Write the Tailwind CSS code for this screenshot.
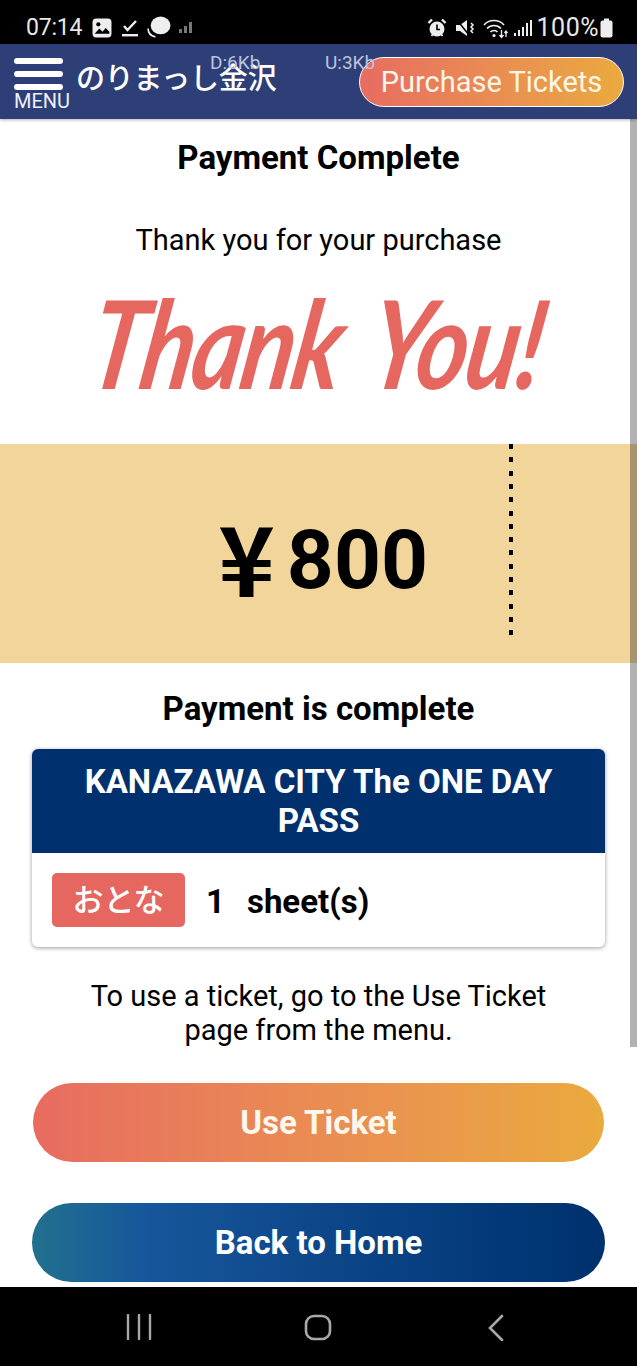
<!DOCTYPE html>
<html lang="en">
<head>
<meta charset="utf-8">
<title>Payment Complete</title>
<script src="https://cdn.jsdelivr.net/npm/@tailwindcss/browser@4"></script>
</head>
<body class="m-0 bg-white">
<div class="relative flex h-[1366px] w-[637px] flex-col overflow-hidden font-['Roboto','Noto_Sans_CJK_JP',sans-serif] text-black">

  <!-- Phone status bar -->
  <div class="flex h-[44px] shrink-0 items-center justify-between bg-black pl-[26px] pr-[24px] pt-[11px] text-[#e8e8e8]">
    <div class="flex items-center gap-[7px]">
      <span class="text-[23px] leading-none tracking-[-0.2px]">07:14</span>
      <svg class="ml-[3px]" width="20" height="20" viewBox="0 0 19 19"><rect x="0.5" y="0.5" width="18" height="18" rx="3.5" fill="#eee"/><circle cx="6" cy="6" r="2" fill="#000"/><path d="M2.5 15l4.5-5 3 3 3-3.5 3.5 3.5v2h-14z" fill="#000"/></svg>
      <svg class="ml-[3px]" width="17" height="18" viewBox="0 0 17 18"><path d="M2 7l3.5 4L14 2" fill="none" stroke="#eee" stroke-width="2.4"/><rect x="0" y="15" width="16" height="2.4" fill="#eee"/></svg>
      <svg width="25" height="25" viewBox="0 0 24 24"><ellipse cx="14" cy="10" rx="9.5" ry="8.5" fill="#eee"/><path d="M2 13c0 4 2 7 7 8" fill="none" stroke="#eee" stroke-width="1.6"/></svg>
      <svg class="ml-[1px]" width="14" height="13" viewBox="0 0 14 13"><rect x="0" y="8" width="3" height="4" fill="#777"/><rect x="5" y="5" width="3" height="7" fill="#777"/><rect x="10" y="1" width="3" height="11" fill="#777"/></svg>
    </div>
    <div class="flex items-center gap-[5px]">
      <svg class="-ml-[6px]" width="20" height="20" viewBox="0 0 20 20"><circle cx="10" cy="11" r="7.5" fill="#eee"/><path d="M10 6.5v5h3" fill="none" stroke="#000" stroke-width="1.6"/><path d="M1.5 5L5 1.5M18.500 5L15 1.500" stroke="#eee" stroke-width="2.400"/><path d="M4.500 18l1.500-2M15.500 18l-1.500-2" stroke="#eee" stroke-width="1.800"/></svg>
      <svg class="ml-[3px]" width="20" height="20" viewBox="0 0 20 20"><path d="M1 7h4l7-5v16l-7-5H1z" fill="#eee"/><path d="M2 2l12 15" stroke="#000" stroke-width="1.500"/><path d="M16 5l2 2-2 2 2 2-2 2 2 2" fill="none" stroke="#eee" stroke-width="1.500"/></svg>
      <svg class="ml-[3px]" width="26" height="22" viewBox="0 0 26 22"><path d="M1 8c5-6 15-6 20 0M4 11.500c4-4 10-4 14 0M7.500 15c2-2 5-2 7 0" fill="none" stroke="#eee" stroke-width="1.700"/><circle cx="11" cy="18.500" r="1.600" fill="#eee"/><path d="M18.500 13v7M16.500 18l2 2.500 2-2.500M23 20v-6M21.500 16l1.500-2 1.500 2" fill="none" stroke="#eee" stroke-width="1.300"/></svg>
      <svg width="18" height="18" viewBox="0 0 18 18"><g fill="#eee"><rect x="0" y="14" width="2" height="3"/><rect x="4" y="11" width="2" height="6"/><rect x="8" y="8" width="2" height="9"/><rect x="12" y="4" width="2" height="13"/><rect x="16" y="1" width="2" height="16"/></g></svg>
      <span class="text-[25px] leading-none tracking-[0.5px]">100%</span>
      <svg class="-ml-[4px]" width="13" height="20" viewBox="0 0 13 20"><rect x="0.500" y="2.500" width="12" height="17" rx="2" fill="#eee"/><rect x="4" y="0.500" width="5" height="3" fill="#eee"/></svg>
    </div>
  </div>

  <!-- Application header -->
  <header class="relative flex h-[75px] shrink-0 items-center justify-between bg-[#2e3f78] pl-[14px] pr-[13px] shadow-[0_1px_3px_rgba(0,0,0,0.3)]">
    <div class="flex h-full items-start">
      <div class="flex w-[58px] flex-col pt-[14px]">
        <div class="flex w-[49px] flex-col gap-[7px]">
          <span class="h-[6px] rounded-full bg-white"></span>
          <span class="h-[6px] rounded-full bg-white"></span>
          <span class="h-[6px] rounded-full bg-white"></span>
        </div>
        <span class="text-[20px] leading-[22px] text-[#eef0f8]">MENU</span>
      </div>
      <span class="ml-[4px] mt-[21px] text-[29px] font-medium leading-none tracking-[-0.2px] text-white">のりまっし金沢</span>
    </div>
    <a class="flex h-[50px] w-[265px] items-center justify-center rounded-full border border-white bg-linear-to-r from-[#e76c60] to-[#eaaa3d] pt-[1px] text-[29px] leading-none text-[#fdf6ea]">Purchase Tickets</a>
    <!-- Data-rate overlay drawn by the phone -->
    <span class="absolute left-[210px] top-[9px] text-[19px] leading-none text-[#bcc3dd]">D:6Kb</span>
    <span class="absolute left-[325px] top-[9px] text-[19px] leading-none text-[#bcc3dd]">U:3Kb</span>
  </header>

  <!-- Page body -->
  <main class="flex min-h-0 flex-1 flex-col items-center">
    <h1 class="mt-[21px] text-[33px] font-bold leading-[36px]">Payment Complete</h1>
    <p class="mt-[47px] text-[29px] leading-[34px]">Thank you for your purchase</p>
    <p class="mt-[16px] flex h-[136px] w-full items-center justify-center font-['Lato','Roboto',sans-serif] text-[98px] font-bold italic leading-none tracking-[-2px] [word-spacing:14px] text-[#e5675f] -skew-x-12 scale-y-125 whitespace-nowrap">Thank You!</p>

    <!-- Amount band -->
    <section class="relative mt-[35px] flex h-[219px] w-full shrink-0 items-center bg-[#f2d59b]">
      <div class="flex w-[511px] items-center justify-end pr-[83px] pt-[13px] font-bold leading-none">
        <span class="mb-[8px] font-['Noto_Sans_CJK_JP',sans-serif] text-[96px] leading-[82px]">¥</span>
        <span class="ml-[12px] text-[82px]">800</span>
      </div>
      <span class="absolute left-[509px] top-0 h-[199px] w-[4px] bg-[repeating-linear-gradient(to_bottom,#000_0,#000_5px,transparent_5px,transparent_13.3px)]"></span>
    </section>

    <h2 class="mt-[28px] text-[33px] font-bold leading-[36px]">Payment is complete</h2>

    <!-- Purchased ticket card -->
    <section class="mt-[22px] w-[573px] overflow-hidden rounded-[6px] bg-white shadow-[0_1px_4px_rgba(0,0,0,0.4)]">
      <h3 class="flex h-[104px] items-center justify-center bg-[#00306e] px-[40px] text-center text-[33px] font-bold leading-[39px] text-white">KANAZAWA CITY The ONE DAY PASS</h3>
      <div class="flex h-[94px] items-center pl-[20px]">
        <span class="flex h-[54px] w-[133px] items-center justify-center rounded-[5px] bg-[#e5675f] text-[31px] font-medium leading-none text-white">おとな</span>
        <span class="ml-[21px] pt-[3px] text-[33px] font-bold leading-none">1</span>
        <span class="ml-[22px] pt-[3px] text-[33px] font-bold leading-none">sheet(s)</span>
      </div>
    </section>

    <p class="mt-[32px] w-[480px] text-center text-[29px] leading-[34px]">To use a ticket, go to the Use Ticket page from the menu.</p>

    <a class="mt-[36px] flex h-[79px] w-[571px] shrink-0 items-center justify-center rounded-full bg-linear-to-r from-[#e76c60] to-[#eaaa3d] text-[33px] font-bold leading-none text-[#fdf8ee]">Use Ticket</a>
    <a class="mt-[41px] flex h-[79px] w-[573px] shrink-0 items-center justify-center rounded-full bg-linear-to-r from-[#22708f] via-[#17569b] via-20% to-[#00306e] text-[33px] font-bold leading-none text-white">Back to Home</a>
  </main>

  <!-- Scrollbar thumb -->
  <div class="absolute right-0 top-[119px] h-[928px] w-[7px] bg-black/30"></div>

  <!-- Phone navigation bar -->
  <nav class="absolute bottom-0 left-0 flex h-[79px] w-full items-center bg-black">
    <svg class="absolute left-[126px] top-[27px]" width="28" height="26" viewBox="0 0 28 26"><path d="M2 1v24M13 1v24M24 1v24" stroke="#a8a8a8" stroke-width="2.400" stroke-linecap="round"/></svg>
    <svg class="absolute left-[304px] top-[27px]" width="28" height="27" viewBox="0 0 28 27"><rect x="2" y="2" width="24" height="23" rx="8" fill="none" stroke="#a8a8a8" stroke-width="2.600"/></svg>
    <svg class="absolute left-[487px] top-[27px]" width="20" height="27" viewBox="0 0 20 27"><path d="M15 2L3 14l12 12" fill="none" stroke="#a8a8a8" stroke-width="2.600" stroke-linecap="round"/></svg>
  </nav>
</div>
</body>
</html>
